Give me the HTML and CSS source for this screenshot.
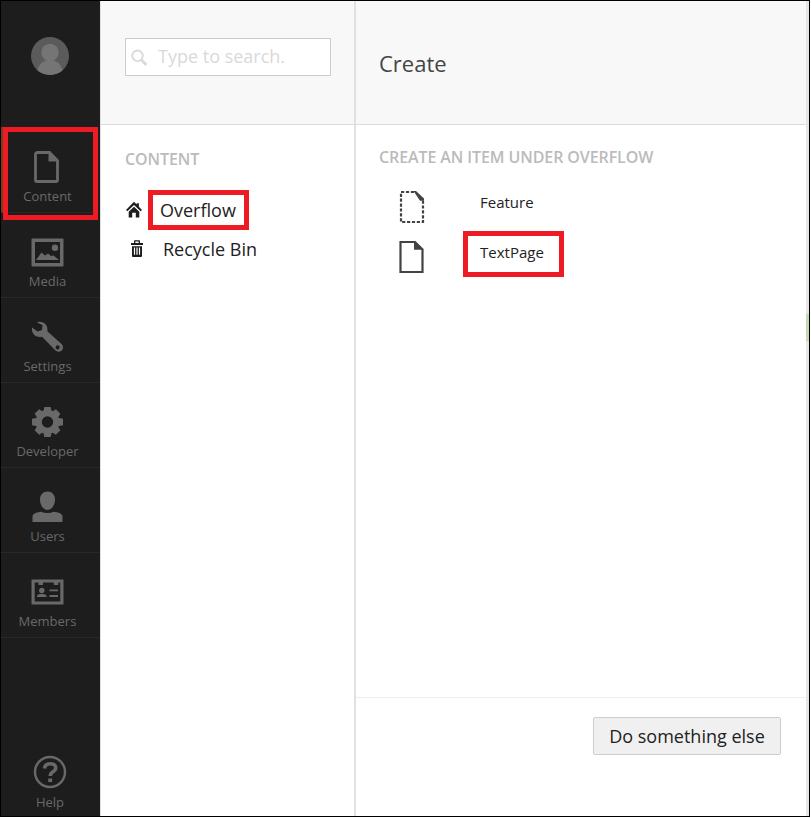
FILE: index.html
```
<!DOCTYPE html>
<html lang="en">
<head>
<meta charset="utf-8">
<title>Create</title>
<link rel="stylesheet" href="styles.css">
</head>
<body>
<div class="app">
  <nav class="rail">
    <div class="profile">
      <svg width="38" height="38" viewBox="0 0 38 38"><defs><clipPath id="disc"><circle cx="19" cy="19" r="19"/></clipPath></defs><g clip-path="url(#disc)"><rect width="38" height="38" fill="#5b5b5b"/><circle cx="19" cy="15.500" r="8.700" fill="#757575"/><path d="M6 34q3-11 13-11t13 11v5H6z" fill="#757575"/></g></svg>
    </div>
    <a class="section active">
      <svg width="34" height="34" viewBox="0 0 34 34"><path d="M7 3h12l8 8v19.500q0 1.500-1.500 1.500h-19Q5 32 5 30.500V5Q5 3 7 3z" transform="translate(.5 -.5)" fill="none" stroke="currentColor" stroke-width="2.800"/><path d="M18.500 2v9.500H28z"/></svg>
      <span>Content</span>
    </a>
    <a class="section">
      <svg width="34" height="34" viewBox="0 0 34 34"><path fill-rule="evenodd" d="M2.500 3.500h30q1 0 1 1v26q0 1-1 1h-30q-1 0-1-1v-26q0-1 1-1zM5 7v21h25V7z"/><circle cx="25" cy="12.800" r="3.200"/><path d="M6 25l5.500-7.500 3.500 3 3-2 3 2.500 2.500-.5L29 25z"/></svg>
      <span>Media</span>
    </a>
    <a class="section">
      <svg width="34" height="34" viewBox="0 0 34 34"><path fill-rule="evenodd" d="M7 2.200c6-1.700 11.500 2.500 10.300 9L31.500 24c4.300 4.500-1.500 10.500-6 6.500L12 16.800C6 18.300 1.200 13.500 2 7.500l5.500 4 4.500-1.500.5-4.700zM25.800 26.500a2 2 0 1 0 3.700 1.600 2 2 0 0 0-3.700-1.600z"/></svg>
      <span>Settings</span>
    </a>
    <a class="section">
      <svg width="34" height="34" viewBox="0 0 34 34"><g transform="translate(17.500 17)"><circle r="8.800" fill="none" stroke="currentColor" stroke-width="6.200"/><g><path d="M-4.200-10l1-5h6.400l1 5zM-4.200 10l1 5h6.400l1-5zM-10-4.200l-5.500 1v6.400l5.500 1zM10-4.200l5.500 1v6.400l-5.500 1z"/><path transform="rotate(45)" d="M-4.200-10l1-5h6.400l1 5zM-4.200 10l1 5h6.400l1-5zM-10-4.200l-5 1v6.400l5 1zM10-4.200l5 1v6.400l-5 1z"/></g></g></svg>
      <span>Developer</span>
    </a>
    <a class="section">
      <svg width="34" height="34" viewBox="0 0 34 34"><path d="M17.500 1.500c4.500 0 7.500 3.500 7.500 8 0 5-3 10.500-7.500 10.500S10 14.500 10 9.500c0-4.500 3-8 7.500-8zM2.500 32v-5.500c0-3 5-4.500 9-4.700q2 1.200 6 1.200t6-1.200c4 .2 9 1.700 9 4.700V32z"/></svg>
      <span>Users</span>
    </a>
    <a class="section">
      <svg width="34" height="34" viewBox="0 0 34 34"><path fill-rule="evenodd" d="M1.500 4.500h32v25h-32zM4.700 7.500v19h25.600v-19h-2V10h-4.500V7.500H13V10H8.500V7.500z"/><circle cx="11.800" cy="15.500" r="2.700"/><path d="M7 22v-1.200q0-1.300 3-1.800h3.500q3 .5 3 1.800V22zM19.500 14.500H28v1.800h-8.500zM19.500 20H28v1.900h-8.500z"/></svg>
      <span>Members</span>
    </a>
    <a class="help">
      <svg width="34" height="34" viewBox="0 0 34 34"><circle cx="17" cy="17" r="15" fill="none" stroke="currentColor" stroke-width="2.400"/><path d="M11.500 13.500Q12 8.800 17.200 8.800q5.500 0 5.500 4.200 0 2-2.700 3.700-2.700 1.600-2.700 4.300" fill="none" stroke="currentColor" stroke-width="3.600"/><path d="M15.200 23.500h4V27h-4z"/></svg>
      <span>Help</span>
    </a>
  </nav>

  <aside class="tree">
    <header class="bar search-bar">
      <label class="search">
        <svg width="17" height="17" viewBox="0 0 17 17" fill="none" stroke="#dadada"><circle cx="6.500" cy="6.800" r="5.300" stroke-width="1.900"/><path d="M10.500 11l4 4" stroke-width="3" stroke-linecap="round"/></svg>
        <span>Type to search.</span>
      </label>
    </header>
    <h2 class="caption tree-caption">CONTENT</h2>
    <div class="node">
      <svg width="18" height="18" viewBox="0 0 18 18"><path d="M9 .8l2.700 2.700V2.200h2.200v3.500L17 8.900l-1.400 1.400L9 3.900l-6.600 6.400L1 8.900z"/><path d="M9 5.700l5.300 5V16.500h-3.500v-4.700H7.200v4.700H3.700v-5.800z"/></svg>
      <span class="marked overflow">Overflow</span>
    </div>
    <div class="node bin">
      <svg width="18" height="18" viewBox="0 0 18 18"><path fill-rule="evenodd" d="M3 3h3V1q0-.8.800-.8h4.400q.8 0 .8.800v2h3v2H3zM7.300 1.600V3h3.400V1.600zM4 6.200h10V16q0 1-1 1H5q-1 0-1-1zM5.900 7.500v7.300h1.200V7.500zm2.500 0v7.300h1.200V7.500zm2.500 0v7.300h1.200V7.500z"/></svg>
      <span>Recycle Bin</span>
    </div>
  </aside>

  <main class="dialog">
    <header class="bar"><h1>Create</h1></header>
    <div class="body">
      <h2 class="caption">CREATE AN ITEM UNDER OVERFLOW</h2>
      <div class="doc">
        <svg width="26" height="34" viewBox="0 0 26 34"><path d="M15 2H2v30h22V10" fill="none" stroke="#434343" stroke-width="2.200" stroke-dasharray="3.200 1.700"/><path d="M14.500 1H17l8 7.500v2.300h-4z"/></svg>
        <span>Feature</span>
      </div>
      <div class="doc">
        <svg width="26" height="34" viewBox="0 0 26 34"><path d="M16 2H1.500v30h22V9.500z" fill="none" stroke="#434343" stroke-width="2.200"/><path d="M15 .8l9.600 9H15z"/></svg>
        <span class="marked page">TextPage</span>
      </div>
    </div>
    <footer><button>Do something else</button></footer>
  </main>
  <div class="edge"></div>
</div>
</body>
</html>
```
FILE: styles.css
```
*, *::after { box-sizing: border-box; }

body {
  margin: 0;
  background: #fff;
  font-family: "Open Sans", sans-serif;
}

.app {
  display: flex;
  width: 810px;
  height: 817px;
  border: 1px solid #000;
  overflow: hidden;
}

svg { display: block; flex: none; }

.rail {
  display: flex;
  flex-direction: column;
  width: 99px;
  background: #1d1d1d;
  color: #696969;
  font-size: 13px;
  line-height: 18px;
}

.rail svg { fill: currentColor; }

.profile {
  height: 126px;
  padding: 36px 0 0 30px;
}

.section {
  display: flex;
  flex-direction: column;
  align-items: center;
  gap: 3px;
  height: 85px;
  padding: 22px 6px 0 0;
  border-bottom: 1px solid #282828;
}

.section svg { margin-left: -1px; }

.section.active {
  position: relative;
  height: 86px;
  padding: 23px 8px 0 0;
  border-left: 2px solid #7a3d1c;
}

.section.active::after {
  content: "";
  position: absolute;
  left: 0;
  top: 0;
  width: 95px;
  height: 93px;
  border: 5px solid #ed1c24;
}

.help {
  display: flex;
  flex-direction: column;
  align-items: center;
  gap: 4px;
  margin-top: auto;
  padding: 0 1px 5px 0;
}

.tree {
  width: 256px;
  border-left: 1px solid #e0e0e0;
  border-right: 2px solid #e1e1e1;
}

.bar {
  height: 124px;
  background: #f8f8f8;
  border-bottom: 1px solid #dadada;
}

.search-bar { padding: 37px 0 0 24px; }

.search {
  display: flex;
  align-items: center;
  gap: 10px;
  width: 206px;
  height: 38px;
  padding: 0 0 2px 5px;
  border: 1px solid #ccc;
  background: #fff;
  color: #d9d9d9;
  font-size: 18px;
}

.search svg { margin-top: 2px; }

.caption {
  margin: 0;
  color: #bbb;
  font-size: 16px;
  font-weight: 600;
  line-height: 20px;
  letter-spacing: -.1px;
  white-space: nowrap;
}

.tree-caption { padding: 24px 0 0 24px; }

.node {
  display: flex;
  align-items: center;
  gap: 5px;
  height: 40px;
  margin-top: 21px;
  padding-left: 24px;
  color: #222;
  font-size: 18px;
}

.node svg { fill: #1d1d1d; }

.node.bin {
  gap: 17px;
  height: 38px;
  margin-top: 0;
  padding-left: 27px;
}

.marked {
  display: flex;
  align-items: center;
  border: 5px solid #ed1c24;
}

.overflow {
  width: 101px;
  height: 40px;
  padding-left: 7px;
}

.dialog {
  display: flex;
  flex-direction: column;
  width: 450px;
}

.dialog h1 {
  margin: 0;
  padding: 46px 0 0 23px;
  color: #444;
  font-size: 22px;
  font-weight: 400;
  line-height: 32px;
}

.body {
  flex: 1;
  padding: 22px 0 0 23px;
}

.body .caption { margin-bottom: 14px; }

.doc {
  display: flex;
  align-items: center;
  height: 50px;
  padding-left: 20px;
  font-size: 15px;
  color: #222;
}

.doc svg {
  fill: #434343;
  margin-top: 1px;
}

.doc span { margin: -9px 0 0 55px; }

.doc .page {
  width: 101px;
  height: 46px;
  margin: -5px 0 0 38px;
  padding: 0 0 4px 12px;
}

footer {
  display: flex;
  justify-content: flex-end;
  height: 119px;
  padding: 19px 25px 0 0;
  border-top: 1px solid #eee;
}

footer button {
  width: 188px;
  height: 38px;
  border: 1px solid #ccc;
  border-radius: 2px;
  padding: 0 0 1px;
  background: #f0f0f0;
  color: #222;
  font: 18px "Open Sans", sans-serif;
}

.edge {
  width: 3px;
  background: linear-gradient(#c5d9b5, #c5d9b5) 0 313px / 3px 27px no-repeat #e5e5e5;
}
```
